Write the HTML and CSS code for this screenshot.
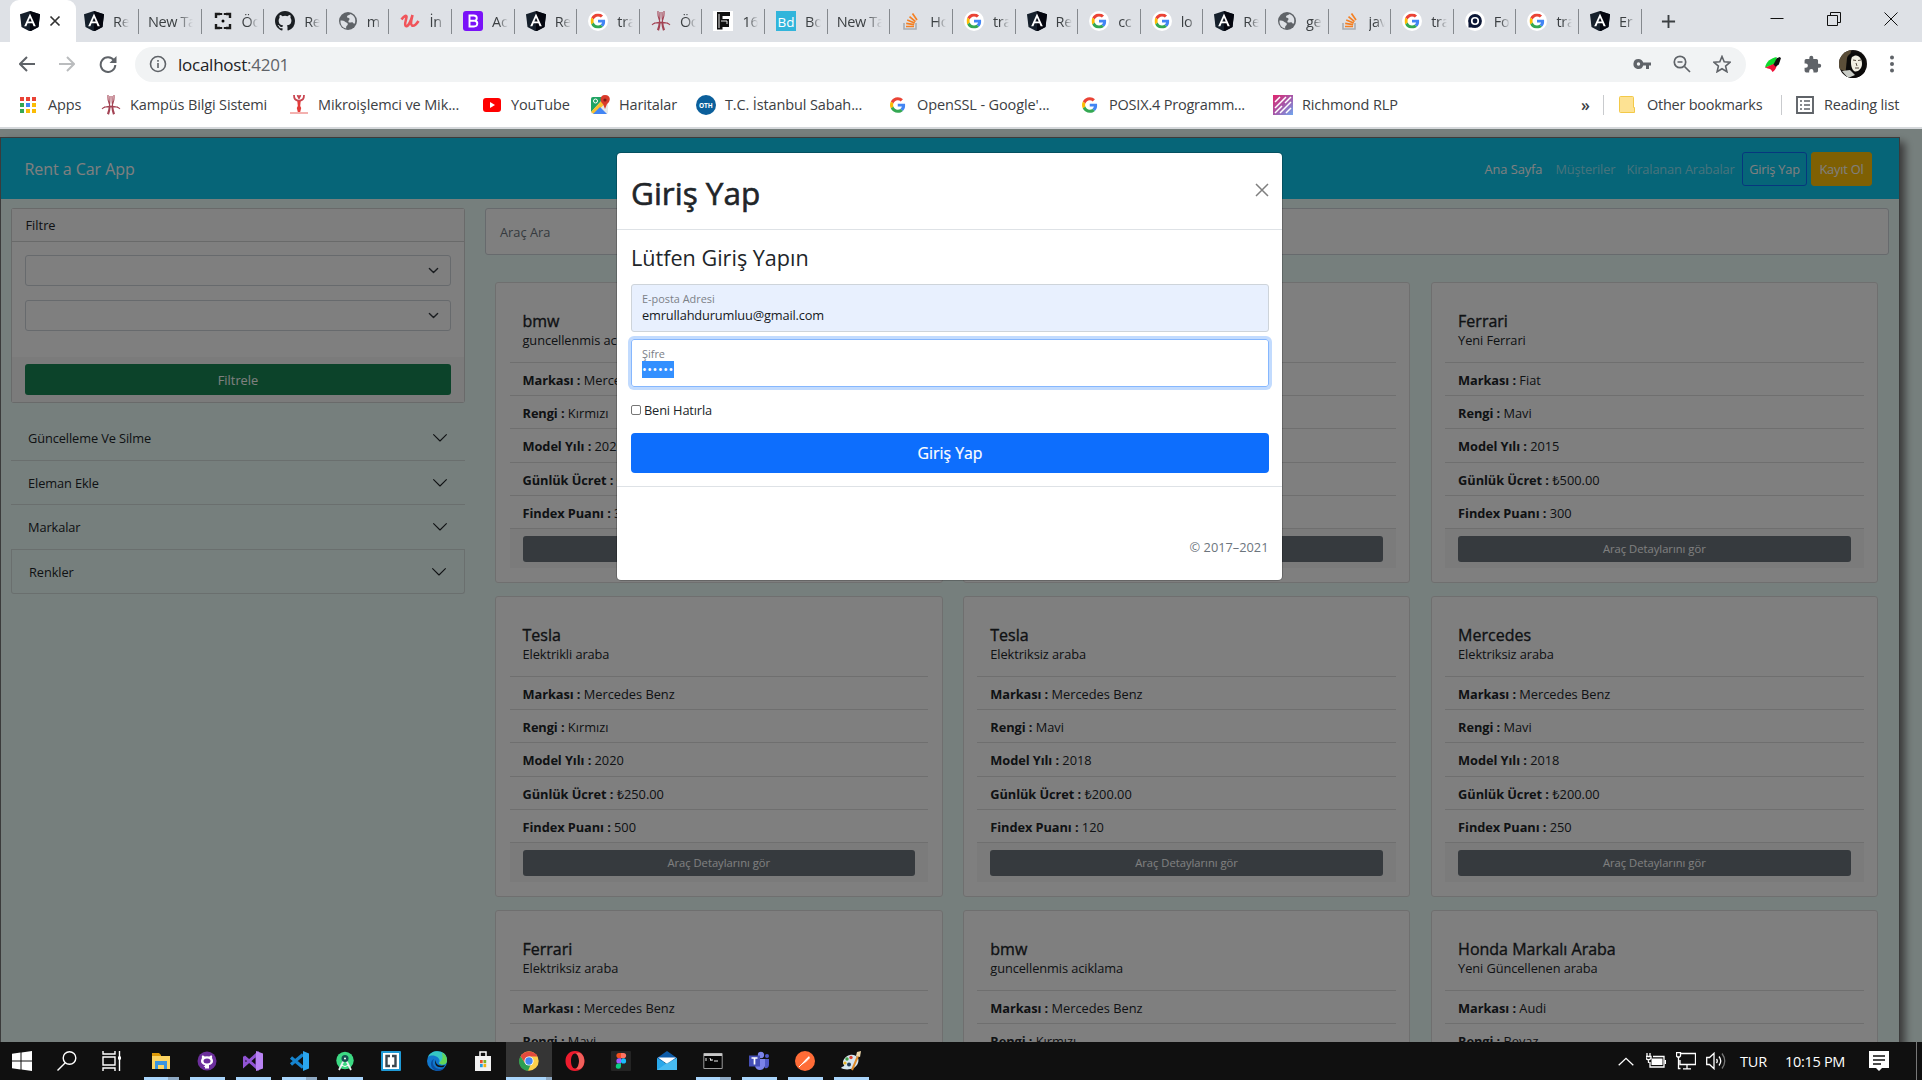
FILE: index.html
```html
<!DOCTYPE html>
<html lang="tr">
<head>
<meta charset="utf-8">
<title>Rent a Car App</title>
<link rel="stylesheet" href="styles.css">
</head>
<body>
<svg class="sprite" width="0" height="0">
<symbol id="ng" viewBox="0 0 20 20"><path d="M10 0 0 3.300 1.500 16 10 20.500 18.500 16 20 3.300Z" fill="#16202c"/><path d="M10 0v20.500L18.500 16 20 3.300Z" fill="#04060f"/><path d="M10 2.500 4.200 15.200h2.200l1.200-2.900h4.800l1.200 2.900h2.200Zm0 4.200 1.700 3.900H8.300Z" fill="#fff"/></symbol>
<symbol id="g" viewBox="0 0 48 48"><path fill="#ea4335" d="M24 9.500c3.500 0 6.700 1.200 9.200 3.600l6.900-6.900C35.900 2.400 30.500 0 24 0 14.600 0 6.500 5.400 2.600 13.200l8 6.200C12.400 13.700 17.700 9.500 24 9.500z"/><path fill="#4285f4" d="M47 24.500c0-1.600-.2-3.100-.4-4.500H24v9h12.900c-.6 3-2.300 5.500-4.800 7.200l7.700 6C44.400 38 47 31.800 47 24.500z"/><path fill="#fbbc05" d="M10.500 28.600c-.5-1.400-.8-3-.8-4.600s.3-3.200.8-4.600l-8-6.200C.9 16.500 0 20.100 0 24s.9 7.500 2.600 10.800z"/><path fill="#34a853" d="M24 48c6.500 0 11.900-2.100 15.900-5.800l-7.700-6c-2.200 1.500-4.900 2.300-8.200 2.300-6.300 0-11.600-4.200-13.500-9.900l-8 6.200C6.500 42.600 14.600 48 24 48z"/></symbol>
<symbol id="gc" viewBox="0 0 20 20"><circle cx="10" cy="10" r="10" fill="#fff"/><use href="#g" x="2.500" y="2.500" width="15" height="15"/></symbol>
<symbol id="globe" viewBox="0 0 20 20"><circle cx="10" cy="10" r="9" fill="#5f6368"/><path d="M2.500 9.500c2 0 3.500 0 4.500 1.200 1 1 3 .8 2.800 2.500-.2 1.500-2 1.300-1.600 4.200-4-.6-6-4-5.700-7.900zM12.500 3c-1 1.500-3.500 1-3.500 2.700s2.500.8 2.500 2.300S9.800 9.500 10.500 11s3.500-.5 4.500.8 1.500 1 2 .2C18 8 16.500 4.500 12.500 3z" fill="#dee1e6"/></symbol>
<symbol id="itu" viewBox="0 0 20 20"><g fill="none" stroke="#a34354" stroke-width="1.100"><path d="M7 0c0 4-.5 5 1 8s1.500 6-.5 11.500M9 1c0 5 0 12-2.500 18M13 0c0 4 .5 5-1 8s-1.500 6 .5 11.500M11 1c0 5 0 12 2.500 18"/><path d="M1 14c3-3.500 15-3.500 18 0M3 12h14"/></g></symbol>
<symbol id="so" viewBox="0 0 20 20"><path d="M3 12v6h12v-6" fill="none" stroke="#a9adb2" stroke-width="1.600"/><path d="M5 15.500h8M5.200 12.400l8 1.200M6.200 9l7.500 3M8.500 5.700l6 5M11.500 2.500l4.500 6.500" stroke="#f48024" stroke-width="1.700"/></symbol>
<symbol id="chev" viewBox="0 0 16 16"><path d="M1.600 4.600 8 11l6.400-6.400" fill="none" stroke="currentColor" stroke-linecap="round" stroke-linejoin="round" stroke-width="1.100"/></symbol>
<symbol id="chevb" viewBox="0 0 16 16"><path d="m2 5 6 6 6-6" fill="none" stroke="#343a40" stroke-linecap="round" stroke-linejoin="round" stroke-width="2"/></symbol>
</svg>

<header class="browser">
  <div class="tabs">
    <div class="tab active"><svg class="fav"><use href="#ng"/></svg><svg class="tab-x" viewBox="0 0 12 12"><path d="m1.500 1.500 9 9m0-9-9 9"/></svg></div>
    <div class="tab second"><svg class="fav"><use href="#ng"/></svg><span>Re</span></div>
    <div class="tab wide"><span>New Ta</span></div>
    <div class="tab"><svg class="fav" viewBox="0 0 20 20"><path d="M3 7V3h4M13 3h4v4M17 13v4h-4M7 17H3v-4M8 2v2M12 2v2M8 16v2M12 16v2" fill="none" stroke="#1b1b1b" stroke-width="2.400"/><circle cx="10" cy="10" r="1.500"/></svg><span>Öd</span></div>
    <div class="tab"><svg class="fav" viewBox="0 0 16 16"><path fill="#1b1f23" d="M8 0C3.580 0 0 3.580 0 8c0 3.540 2.290 6.530 5.470 7.590.4.070.55-.17.55-.38 0-.19-.01-.82-.01-1.490-2.010.37-2.530-.49-2.690-.94-.09-.23-.48-.94-.82-1.130-.28-.15-.68-.52-.01-.53.63-.01 1.080.58 1.230.82.72 1.210 1.870.87 2.330.66.070-.52.28-.87.51-1.070-1.780-.2-3.640-.89-3.640-3.950 0-.87.310-1.590.82-2.150-.08-.2-.36-1.020.08-2.120 0 0 .67-.21 2.200.82a7.500 7.500 0 0 1 4 0c1.530-1.040 2.200-.82 2.200-.82.44 1.100.16 1.920.08 2.120.51.56.82 1.270.82 2.150 0 3.070-1.870 3.750-3.650 3.950.29.25.54.73.54 1.480 0 1.070-.01 1.930-.01 2.200 0 .21.15.46.55.38A8 8 0 0 0 16 8c0-4.420-3.580-8-8-8"/></svg><span>Re</span></div>
    <div class="tab"><svg class="fav"><use href="#globe"/></svg><span>m</span></div>
    <div class="tab"><svg class="fav" viewBox="0 0 20 20"><path d="M1.500 8.500C3.500 5.500 6 4 6.500 5.500S3.500 14 6 15s5-5.500 6.500-11M12.500 4c-1 4-2.500 9.500-.5 10.500s4.500-1.500 6.500-4.500" fill="none" stroke="#f0545a" stroke-width="2.600"/></svg><span>İn</span></div>
    <div class="tab"><svg class="fav" viewBox="0 0 20 20"><rect width="20" height="20" rx="3" fill="#7a12f8"/><path d="M6.500 4.500h4.300c3.800 0 3.800 4.800.9 5.200 3.700.5 3.400 5.800-.7 5.800H6.500zM7 9.700h4.500" fill="none" stroke="#fff" stroke-width="1.900"/></svg><span>Ac</span></div>
    <div class="tab"><svg class="fav"><use href="#ng"/></svg><span>Re</span></div>
    <div class="tab"><svg class="fav"><use href="#gc"/></svg><span>tra</span></div>
    <div class="tab"><svg class="fav"><use href="#itu"/></svg><span>Öd</span></div>
    <div class="tab"><svg class="fav" viewBox="0 0 20 20"><path fill="#fff" d="M0 0h20v20H0z"/><path d="M4 1h13v4H9.500v3H16v8H9.500v2.500H4z" fill="#111"/><path d="M6 3v14M14 10v3M8 10h6" stroke="#fff" stroke-width=".9"/></svg><span>16</span></div>
    <div class="tab"><svg class="fav" viewBox="0 0 20 20"><path fill="#32b5db" d="M0 0h20v20H0z"/><text x="1.500" y="15.500" font-size="13.500" fill="#fff">Bd</text></svg><span>Bo</span></div>
    <div class="tab wide"><span>New Ta</span></div>
    <div class="tab"><svg class="fav"><use href="#so"/></svg><span>Ho</span></div>
    <div class="tab"><svg class="fav"><use href="#gc"/></svg><span>tra</span></div>
    <div class="tab"><svg class="fav"><use href="#ng"/></svg><span>Re</span></div>
    <div class="tab"><svg class="fav"><use href="#gc"/></svg><span>cc</span></div>
    <div class="tab"><svg class="fav"><use href="#gc"/></svg><span>lo</span></div>
    <div class="tab"><svg class="fav"><use href="#ng"/></svg><span>Re</span></div>
    <div class="tab"><svg class="fav"><use href="#globe"/></svg><span>ge</span></div>
    <div class="tab"><svg class="fav"><use href="#so"/></svg><span>jav</span></div>
    <div class="tab"><svg class="fav"><use href="#gc"/></svg><span>tra</span></div>
    <div class="tab"><svg class="fav" viewBox="0 0 20 20"><circle cx="10" cy="10" r="10" fill="#fff"/><circle cx="10" cy="10" r="5.500" fill="none" stroke="#0c1736" stroke-width="2.800"/><circle cx="10" cy="10" r="2.400" fill="#0c1736"/><path d="M3.500 12.500v4h6z" fill="#0c1736"/></svg><span>Fo</span></div>
    <div class="tab"><svg class="fav"><use href="#gc"/></svg><span>tra</span></div>
    <div class="tab"><svg class="fav"><use href="#ng"/></svg><span>Er</span></div>
    <svg class="new-tab" viewBox="0 0 16 16"><path d="M8 1v14M1 8h14"/></svg>
    <div class="win">
      <svg viewBox="0 0 14 14"><path d="M.5 6.500h13"/></svg>
      <svg viewBox="0 0 14 14"><path d="M.5 3.500h10v10H.5zM3.500 3.500v-3h10v10h-3"/></svg>
      <svg viewBox="0 0 14 14"><path d="m.5.5 13 13m0-13-13 13"/></svg>
    </div>
  </div>
  <div class="toolbar">
    <svg class="nav" viewBox="0 0 16 16"><path d="M16 8H1.500M8 1 1 8l7 7"/></svg>
    <svg class="nav dim" viewBox="0 0 16 16"><path d="M0 8h14.500M8 1l7 7-7 7"/></svg>
    <svg class="nav reload" viewBox="0 0 18 18"><path d="M15 5.500A7.300 7.300 0 1 0 16.300 10"/><path class="fill" d="M17.500 1v7h-7z"/></svg>
    <div class="omnibox">
      <svg class="info" viewBox="0 0 18 18"><circle cx="9" cy="9" r="7.500"/><path d="M9 8v5M9 5v1.700"/></svg>
      <span class="url">localhost<i>:4201</i></span>
      <svg class="o1" viewBox="0 0 18 12"><path d="M5.500 1a5 5 0 1 0 4.700 6.500H13V11h3V7.500h2v-3h-7.800A5 5 0 0 0 5.500 1zm0 3.300a1.700 1.700 0 1 1 0 3.400 1.700 1.700 0 0 1 0-3.400z" fill="#5f6368"/></svg>
      <svg class="o2" viewBox="0 0 18 18"><g fill="none" stroke="#5f6368" stroke-width="1.700"><circle cx="7" cy="7" r="5.700"/><path d="m11.500 11.500 5.500 5.500M4.500 7h5"/></g></svg>
      <svg class="o3" viewBox="0 0 18 18"><path d="m9 1.500 2.200 5.300 5.800.5-4.400 3.800 1.300 5.600L9 13.700l-4.900 3 1.300-5.600L1 7.300l5.800-.5z" fill="none" stroke="#5f6368" stroke-width="1.600"/></svg>
    </div>
    <svg class="ext idm" viewBox="0 0 16 16"><path d="M0 11C1 5 6 2 11 1l-1 6z" fill="#0ddc2c"/><path d="M0 11 11 6c1 4-2 8-4 9-1-3-3-3-7-4z" fill="#f01038"/><path d="m8 8 3-6 3-1 1 1-2 6-3 2z" fill="#111"/></svg>
    <svg class="ext puzzle" viewBox="0 0 24 24"><path fill="#5f6368" d="M20.500 11H19V7a2 2 0 0 0-2-2h-4V3.500a2.500 2.500 0 0 0-5 0V5H4a2 2 0 0 0-2 2v3.800h1.500a2.700 2.700 0 0 1 0 5.400H2V20c0 1.100.9 2 2 2h3.800v-1.500a2.700 2.700 0 0 1 5.400 0V22H17a2 2 0 0 0 2-2v-4h1.500a2.500 2.500 0 0 0 0-5z"/></svg>
    <svg class="avatar" viewBox="0 0 28 28"><defs><clipPath id="av"><circle cx="14" cy="14" r="14"/></clipPath></defs><g clip-path="url(#av)"><path fill="#14100f" d="M0 0h28v28H0z"/><path fill="#5b4e39" d="M0 0h12L9 22 0 19z"/><path fill="#0b0a0a" d="M8 8c2-8 18-8 18 5v10l-7 5H6z"/><path fill="#f1eee2" d="M13 7c5-4 10 0 10 7 0 5-5 9-8 7s-4-10-2-14z"/><path d="m14 10 3 .5m2 0 3-.5m-5 3 1 3m-2 2h4" stroke="#55483e"/><path fill="#c9ccc6" d="m3 21 8-1 5 5-7 3z"/></g></svg>
    <svg class="dots" viewBox="0 0 4 18"><circle cx="2" cy="2.500" r="2"/><circle cx="2" cy="9" r="2"/><circle cx="2" cy="15.500" r="2"/></svg>
  </div>
  <nav class="bookmarks">
    <a class="b1"><svg viewBox="0 0 20 20"><path fill="#ea4335" d="M1 2h4v4H1zM7 2h4v4H7zM13 2h4v4h-4z"/><path fill="#34a853" d="M1 8h4v4H1zM1 14h4v4H1z"/><path fill="#4285f4" d="M7 8h4v4H7z"/><path fill="#fbbc05" d="M13 8h4v4h-4zM7 14h4v4H7zM13 14h4v4h-4z"/></svg>Apps</a>
    <a class="b2"><svg><use href="#itu"/></svg>Kampüs Bilgi Sistemi</a>
    <a class="b3"><svg viewBox="0 0 20 20"><path d="M5 0c0 4 1 5 5 6 4-1 5-2 5-6M8.500 0 10 3 11.500 0" fill="none" stroke="#c94550" stroke-width="1.800"/><path d="M8.300 6h3.400l-.5 5 1 2-1 4H8.800l-1-4 1-2z" fill="#e23b39"/><path d="M1 18h18" stroke="#ef9795" stroke-width="1.500"/></svg>Mikroişlemci ve Mik...</a>
    <a class="b4"><svg viewBox="0 0 20 20"><rect x="1" y="3" width="18" height="14" rx="3" fill="#f00"/><path fill="#fff" d="m8 7 5 3-5 3z"/></svg>YouTube</a>
    <a class="b5"><svg viewBox="0 0 20 20"><rect x="1" y="2" width="17" height="17" rx="2" fill="#e6e9e8"/><path fill="#1fa463" d="M3 2h12L1 17V4q0-2 2-2z"/><path fill="#fbc02d" d="m1 17 3 2L18 6V2h-3z"/><path fill="#4285f4" d="m3 19 7-7 7 7z"/><path fill="#d93b2b" d="M15 0c6 0 6 6 2 9l-2 5-2-5c-4-3-3-9 2-9z"/><circle cx="15" cy="5" r="1.600" fill="#7c1c14"/><circle cx="5.500" cy="6" r="2" fill="none" stroke="#fff"/></svg>Haritalar</a>
    <a class="b6"><svg viewBox="0 0 20 20"><circle cx="10" cy="10" r="10" fill="#0b5f9b"/><text x="3" y="12.500" font-size="6.500" font-weight="700" fill="#fff">OTH</text></svg>T.C. İstanbul Sabah...</a>
    <a class="b7"><svg viewBox="0 0 20 20"><use href="#g" x="1" y="2" width="15.500" height="16"/></svg>OpenSSL - Google'...</a>
    <a class="b8"><svg viewBox="0 0 20 20"><use href="#g" x="1" y="2" width="15.500" height="16"/></svg>POSIX.4 Programm...</a>
    <a class="b9"><svg viewBox="0 0 20 20"><defs><linearGradient id="rg" x1="0" y1="0" x2="1" y2="1"><stop offset="0" stop-color="#e0246c"/><stop offset=".5" stop-color="#a757a8"/><stop offset="1" stop-color="#6fa8f0"/></linearGradient></defs><path fill="url(#rg)" d="M0 0h20v20H0z"/><path d="M2 7 7 2M2 13 13 2M2 18 9 11M12 8l6-6M7 18 18 7M13 18l5-5" stroke="#fff" stroke-width="1.500"/></svg>Richmond RLP</a>
    <b class="more">»</b>
    <a class="b10"><svg viewBox="0 0 20 20"><path fill="#fde293" stroke="#f3c948" d="M2.500 1.500h12q1 0 1 1v10h1v5h-14q-1 0-1-1v-14q0-1 1-1z"/></svg>Other bookmarks</a>
    <a class="b11"><svg viewBox="0 0 20 20"><path d="M2 2h16v16H2z" fill="none" stroke="#5f6368" stroke-width="1.900"/><path d="M5 6h2m2 0h6M5 10h2m2 0h6M5 14h2m2 0h6" stroke="#5f6368" stroke-width="1.700"/></svg>Reading list</a>
  </nav>
</header>

<main class="page">
  <div class="app">
    <div class="navbar">
      <span class="brand">Rent a Car App</span>
      <span class="link on">Ana Sayfa</span><span class="link l2">Müşteriler</span><span class="link l3">Kiralanan Arabalar</span>
      <span class="btn-login">Giriş Yap</span><span class="btn-reg">Kayıt Ol</span>
    </div>
    <div class="columns">
      <aside>
        <div class="filter">
          <div class="filter-head">Filtre</div>
          <div class="filter-body">
            <div class="select"><svg><use href="#chevb"/></svg></div>
            <div class="select"><svg><use href="#chevb"/></svg></div>
          </div>
          <div class="filter-foot"><div class="btn-green">Filtrele</div></div>
        </div>
        <div class="acc">
          <div class="acc-item">Güncelleme Ve Silme<svg><use href="#chev"/></svg></div>
          <div class="acc-item">Eleman Ekle<svg><use href="#chev"/></svg></div>
          <div class="acc-item">Markalar<svg><use href="#chev"/></svg></div>
          <div class="acc-item boxed">Renkler<svg><use href="#chev"/></svg></div>
        </div>
      </aside>
      <section>
        <div class="search">Araç Ara</div>
        <div class="cards">
          <article><h5>bmw</h5><p>guncellenmis aciklama</p><ul><li><b>Markası :</b> Mercedes Benz</li><li><b>Rengi :</b> Kırmızı</li><li><b>Model Yılı :</b> 2020</li><li><b>Günlük Ücret :</b> ₺250.00</li><li><b>Findex Puanı :</b> 300</li></ul><div class="foot"><div></div></div></article>
          <article><h5>Tesla</h5><p>Elektrikli araba</p><ul><li></li><li></li><li></li><li></li><li></li></ul><div class="foot"><div></div></div></article>
          <article><h5>Ferrari</h5><p>Yeni Ferrari</p><ul><li><b>Markası :</b> Fiat</li><li><b>Rengi :</b> Mavi</li><li><b>Model Yılı :</b> 2015</li><li><b>Günlük Ücret :</b> ₺500.00</li><li><b>Findex Puanı :</b> 300</li></ul><div class="foot"><div>Araç Detaylarını gör</div></div></article>
          <article><h5>Tesla</h5><p>Elektrikli araba</p><ul><li><b>Markası :</b> Mercedes Benz</li><li><b>Rengi :</b> Kırmızı</li><li><b>Model Yılı :</b> 2020</li><li><b>Günlük Ücret :</b> ₺250.00</li><li><b>Findex Puanı :</b> 500</li></ul><div class="foot"><div>Araç Detaylarını gör</div></div></article>
          <article><h5>Tesla</h5><p>Elektriksiz araba</p><ul><li><b>Markası :</b> Mercedes Benz</li><li><b>Rengi :</b> Mavi</li><li><b>Model Yılı :</b> 2018</li><li><b>Günlük Ücret :</b> ₺200.00</li><li><b>Findex Puanı :</b> 120</li></ul><div class="foot"><div>Araç Detaylarını gör</div></div></article>
          <article><h5>Mercedes</h5><p>Elektriksiz araba</p><ul><li><b>Markası :</b> Mercedes Benz</li><li><b>Rengi :</b> Mavi</li><li><b>Model Yılı :</b> 2018</li><li><b>Günlük Ücret :</b> ₺200.00</li><li><b>Findex Puanı :</b> 250</li></ul><div class="foot"><div>Araç Detaylarını gör</div></div></article>
          <article><h5>Ferrari</h5><p>Elektriksiz araba</p><ul><li><b>Markası :</b> Mercedes Benz</li><li><b>Rengi :</b> Mavi</li></ul></article>
          <article><h5>bmw</h5><p>guncellenmis aciklama</p><ul><li><b>Markası :</b> Mercedes Benz</li><li><b>Rengi :</b> Kırmızı</li></ul></article>
          <article><h5>Honda Markalı Araba</h5><p>Yeni Güncellenen araba</p><ul><li><b>Markası :</b> Audi</li><li><b>Rengi :</b> Beyaz</li></ul></article>
        </div>
      </section>
    </div>
  </div>
  <div class="backdrop">
    <div class="modal">
      <div class="modal-head"><h1>Giriş Yap</h1><svg viewBox="0 0 14 14"><path d="m1 1 12 12m0-12L1 13"/></svg></div>
      <div class="modal-body">
        <h3>Lütfen Giriş Yapın</h3>
        <div class="field mail"><small>E-posta Adresi</small><span>emrullahdurumluu@gmail.com</span></div>
        <div class="field focus"><small>Şifre</small><mark>••••••</mark></div>
        <div class="remember"><i></i>Beni Hatırla</div>
        <div class="btn-blue">Giriş Yap</div>
      </div>
      <div class="modal-foot">© 2017–2021</div>
    </div>
  </div>
</main>

<footer class="taskbar">
  <div class="ti start"><svg viewBox="0 0 20 20"><path fill="#fff" d="m0 2.800 8.500-1.200v8H0zM9.500 1.400 20 0v9.600H9.500zM0 10.500h8.500v8L0 17.300zM9.500 10.500H20V20L9.500 18.600z"/></svg></div>
  <div class="ti search-i"><svg viewBox="0 0 20 20"><g fill="none" stroke="#fff" stroke-width="1.400"><circle cx="12.500" cy="7" r="6.300"/><path d="M8.300 11.700.5 19.500"/></g></svg></div>
  <div class="ti"><svg viewBox="0 0 20 20"><path d="M1 0v3h12V0M1 6h12v8H1zM1 20v-3h12v3M17.500 0v20" fill="none" stroke="#fff" stroke-width="1.400"/><path fill="#fff" d="M16 5.500h3v3h-3z"/></svg></div>
  <div class="ti first run multi"><svg viewBox="0 0 20 20"><path fill="#dd9a08" d="M1 2h7l2 2v3H1z"/><path fill="#fcd462" d="M1 5h18v13H1z"/><path fill="#3a94df" d="M4 10h12v8h-3v-4H7v4H4z"/></svg></div>
  <div class="ti run"><svg viewBox="0 0 20 20"><circle cx="10" cy="10" r="9.500" fill="#6c2f9c"/><path d="M6.500 16c1-1 1.500-1 1.500-2-4-.5-5-4-3-7-.3-1-.2-2 .2-2.500 1 0 2 .5 2.600 1q2.200-.6 4.400 0c.6-.5 1.600-1 2.600-1 .4.500.5 1.500.2 2.500 2 3 1 6.500-3 7v3.500H8V16z" fill="#fff"/><ellipse cx="10" cy="10" rx="3.500" ry="2.500" fill="#6c2f9c"/></svg></div>
  <div class="ti run"><svg viewBox="0 0 20 20"><path d="M1 5.500v9L14 3v14L1 5.500" fill="none" stroke="#9154d5" stroke-width="3"/><path fill="#b983f3" d="m13 0 7 2.500v15L13 20z"/></svg></div>
  <div class="ti run multi"><svg viewBox="0 0 20 20"><path d="m2 6.500 12 10M2 13.500l12-10" stroke="#1684cf" stroke-width="3.300"/><path fill="#2ba6ee" d="m14 0 6 2.500v15L14 20z"/></svg></div>
  <div class="ti run"><svg viewBox="0 0 20 20"><circle cx="10" cy="9.500" r="8.700" fill="#3cd983"/><path d="m9 9-5 10M11 9l5 10" stroke="#e9edf0" stroke-width="1.800"/><circle cx="10" cy="7.500" r="3.500" fill="#164f50"/><circle cx="10" cy="7.500" r="1" fill="#fff"/><path d="M6 14q4 3 8 0" stroke="#fff" fill="none"/></svg></div>
  <div class="ti"><svg viewBox="0 0 20 20"><rect width="20" height="20" rx="1" fill="#1f9ad6"/><path fill="#fff" d="M2 2h16v16H2z"/><path d="M9 5H5.500v10H9M11 5h3.500v10H11" fill="none" stroke="#3a4750" stroke-width="2.400"/></svg></div>
  <div class="ti"><svg viewBox="0 0 20 20"><circle cx="10" cy="10" r="10" fill="#1177cd"/><path fill="#35c7c4" d="M1 6C4-2 20-2 20 9c0 5-6 6-8 3 3-5-6-10-11-6z"/><path fill="#63d657" d="M15 1.500c5 3 6 8 4 11-2 2-5 1-7-.5 4-3 4-6 3-10.500z"/><path fill="#0c4fa0" d="M7 8c-3 4 0 10 7 10q2 0 4-2c-3 6-13 5-14-2-.5-3 1-5 3-6z"/><path fill="#101010" d="M9 9c-1 4 3 7 9 5l-1.500 2C10 17.500 6.500 13 9 9z"/></svg></div>
  <div class="ti"><svg viewBox="0 0 20 20"><path d="M7 6V1h6v5" fill="none" stroke="#fff" stroke-width="1.500"/><path fill="#f2f2f2" d="M2 5h16v15H2z"/><path fill="#e8502a" d="M7 9h2.700v3.200H7z"/><path fill="#7bb52c" d="M10.500 9h2.700v3.200h-2.700z"/><path fill="#249ee0" d="M7 13h2.700v3.200H7z"/><path fill="#f5b412" d="M10.500 13h2.700v3.200h-2.700z"/></svg></div>
  <div class="ti run chrome"><svg viewBox="0 0 20 20"><circle cx="10" cy="10" r="9.700" fill="#fcd04b"/><path fill="#e24b3e" d="M1.500 5.300C5-1 15-1.500 18.700 5.500H10L6 12z"/><path fill="#2d9f52" d="M1.500 5.300 6 12.300l5.500 1.700-2.500 5.700C1 19-2 11 1.500 5.300z"/><circle cx="10" cy="10" r="4.600" fill="#fff"/><circle cx="10" cy="10" r="3.700" fill="#4387f0"/></svg></div>
  <div class="ti"><svg viewBox="0 0 20 20"><path fill="#ed1c2e" fill-rule="evenodd" d="M10 0C4 0 .5 4.500.5 10S4 20 10 20s9.500-4.500 9.500-10S16 0 10 0zm0 2.500c2.500 0 4 3.400 4 7.500s-1.500 7.500-4 7.500S6 14.100 6 10s1.500-7.500 4-7.500z"/><path fill="#f0605b" d="M11 2.700C13 1 16 2 17 3.500c3 3.500 3 9.500 0 13-1.500 1.500-4 2.500-6 .8 4-1.300 4-13.300 0-14.600z"/></svg></div>
  <div class="ti"><svg viewBox="0 0 20 20"><rect width="20" height="20" rx="1" fill="#242424"/><path fill="#f24e1e" d="M10 2H8a2.600 2.600 0 0 0 0 5.200h2z"/><path fill="#ff7262" d="M10 2h2.500a2.600 2.600 0 0 1 0 5.200H10z"/><path fill="#a259ff" d="M10 7.300H8a2.600 2.600 0 0 0 0 5.200h2z"/><circle cx="12.500" cy="9.900" r="2.600" fill="#1abcfe"/><path fill="#0acf83" d="M8 12.600h2v2.600A2.600 2.600 0 1 1 8 12.600z"/></svg></div>
  <div class="ti"><svg viewBox="0 0 20 20"><path fill="#0d5ba8" d="m0 7 10-7 10 7v4H0z"/><path fill="#fff" d="M1 6.500h18L10 13z"/><path fill="#29a8ea" d="m0 7 10 6 10-6v12H0z"/><path fill="#5cc8f5" d="m0 19 10-7 10-5v12z" opacity=".6"/></svg></div>
  <div class="ti run multi"><svg viewBox="0 0 20 20"><path fill="#050505" stroke="#9c9c9c" d="M.8 2.500h18.400v15H.8z"/><path fill="#c8c8c8" d="M1 2.500h18V5H1z"/><path d="M3 7v3M5 8h.1m0 2h.1M7 7l1 3M9 8v2M11 10h4" stroke="#eee"/></svg></div>
  <div class="ti run"><svg viewBox="0 0 20 20"><circle cx="12" cy="4" r="3.200" fill="#7b83eb"/><circle cx="18" cy="5" r="2" fill="#5059c9"/><path fill="#5059c9" d="M13 8h7v6q-1 4-4 3z"/><path fill="#7b83eb" d="M8 8h8v7q-1 4-5 4t-5-4z"/><path fill="#454fb7" d="M0 4.500h11v11H0z"/><path d="M2.500 7h6M5.500 7v6.500" stroke="#fff" stroke-width="1.700"/></svg></div>
  <div class="ti run"><svg viewBox="0 0 20 20"><circle cx="10" cy="10" r="10" fill="#ff6c37"/><path d="m5 15 5-6 4-4 1 2-4 4z" fill="#ffe9e0"/><path d="m4 16 10-10" stroke="#fff"/></svg></div>
  <div class="ti run"><svg viewBox="0 0 20 20"><path fill="#d7e6ef" d="M9 4c6-1 10 3 8 8-3 8-14 7-17 5 2-2 4-2 3-3-3-3 1-9 6-10z"/><circle cx="6" cy="8" r="1.700" fill="#44a34a"/><circle cx="10" cy="6.500" r="1.700" fill="#d94130"/><circle cx="4" cy="12" r="1.600" fill="#e7b52d"/><circle cx="8" cy="13.500" r="2" fill="#233d5c"/><path d="m11 19 6-14" stroke="#e08a27" stroke-width="2"/><path fill="#ecd6aa" d="m15 5 1-4 4-1-1 6z"/></svg></div>
  <div class="tray">
    <svg class="t1" viewBox="0 0 16 9"><path d="m.7 8.300 7.300-7 7.300 7"/></svg>
    <svg class="t2" viewBox="0 0 20 16"><path fill="#fff" stroke="none" d="M5.500 5.500h11v6.500h-11z"/><path d="M7 3.500h11v10.500H4V9M19.500 7v4M1 0v3M4 0v3M0 3.500h5v2q-2.500 2.500-5 0zM2.500 6v4"/></svg>
    <svg class="t3" viewBox="0 0 20 18"><path d="M5 1.500h14.500v11H4V8M11 13v3.500M7 16.800h8M.5.500h4v3.500l-1 1h-2l-1-1zM2.500 5v11.500h2"/></svg>
    <svg class="t4" viewBox="0 0 20 18"><path d="M.7 5.500h2.800L8 1.300v15.400l-4.500-4.200H.7zM10.500 7q1.500 2 0 4M13 4.500q3.500 4.500 0 9"/><path stroke="#777" d="M16 1.500q5.500 7.500 0 15"/></svg>
    <span class="lang">TUR</span><span class="time">10:15 PM</span>
    <svg class="t5" viewBox="0 0 20 20"><path fill="#fff" stroke="none" d="M0 0h20v17h-7l-3 3-3-3H0z"/><path stroke="#101010" d="M4 5h12M4 9h12M4 13h8"/></svg>
    <i class="edge"></i>
  </div>
</footer>
</body>
</html>
```
FILE: styles.css
```css
* { box-sizing: border-box; }
html, body { margin: 0; height: 100%; overflow: hidden; }
body {
  width: 1922px; height: 1080px; display: flex; flex-direction: column;
  font-family: "Open Sans", "Noto Sans", sans-serif; font-size: 12.8px; color: #212529;
}
svg { display: block; flex: none; }
.sprite { position: absolute; }
h1, h3, h5, p, ul { margin: 0; padding: 0; font-weight: 400; }

/* browser chrome */
.browser { flex: none; height: 129px; background: #fff; border-bottom: 2px solid #d5d8db; font-size: 14.500px; color: #3c4043; }
.tabs { display: flex; align-items: center; height: 42px; background: #dee1e6; padding-left: 9.500px; }
.tab { flex: none; width: 62.620px; height: 25px; display: flex; align-items: center; padding-left: 11px; border-right: 1.500px solid #85898e; overflow: hidden; }
.tab span { margin-left: 9px; width: 16px; overflow: hidden; white-space: nowrap; letter-spacing: -.3px; -webkit-mask-image: linear-gradient(90deg, #000 40%, transparent); mask-image: linear-gradient(90deg, #000 40%, transparent); }
.tab.wide { padding-left: 9px; }
.tab.wide span { margin: 0; width: 45px; -webkit-mask-image: linear-gradient(90deg, #000 65%, transparent); mask-image: linear-gradient(90deg, #000 65%, transparent); letter-spacing: -.4px; }
.tab.active { width: 66px; height: 42px; padding: 0 0 0 10px; border: 0; background: #fff; border-radius: 9px 9px 0 0; }
.tab.second { width: 63.500px; padding-left: 8.500px; }
.fav { width: 20px; height: 20px; }
.tab-x { width: 12px; height: 12px; margin-left: 9px; }
.tab-x path { stroke: #333; stroke-width: 1.700; }
.new-tab { width: 15px; height: 15px; margin-left: 19px; }
.new-tab path { stroke: #3c4043; stroke-width: 2; }
.win { display: flex; align-items: center; gap: 43px; margin-left: 94px; margin-top: -5px; }
.win svg { width: 14px; height: 14px; }
.win path { stroke: #111; fill: none; }
.toolbar { display: flex; align-items: center; height: 44px; padding-left: 19px; }
.nav { width: 16px; height: 16px; margin-right: 24px; fill: none; stroke: #5f6368; stroke-width: 2; }
.nav.dim { stroke: #babcbe; }
.nav.reload { width: 18px; height: 18px; margin-right: 18px; }
.nav .fill { fill: #5f6368; stroke: none; }
.omnibox { display: flex; align-items: center; width: 1611px; height: 35px; border-radius: 18px; background: #f1f3f4; padding-left: 14px; }
.info { width: 18px; height: 18px; fill: none; stroke: #5f6368; stroke-width: 1.600; }
.url { width: 1449px; margin-left: 11px; font-size: 17px; letter-spacing: -.25px; color: #202124; }
.url i { font-style: normal; color: #5f6368; }
.o1 { width: 18px; height: 12px; margin-left: 6px; }
.o2 { width: 18px; height: 18px; margin-left: 22px; }
.o3 { width: 18px; height: 18px; margin-left: 22px; }
.idm { width: 17px; height: 17px; margin-left: 19px; }
.puzzle { width: 19px; height: 19px; margin-left: 21px; }
.avatar { width: 28px; height: 28px; margin-left: 17px; }
.dots { width: 4px; height: 18px; margin-left: 23px; fill: #5f6368; }
.bookmarks { display: flex; align-items: center; height: 37px; padding-left: 19px; letter-spacing: -.13px; white-space: nowrap; }
.bookmarks a { flex: none; display: flex; align-items: center; gap: 9px; }
.bookmarks svg { width: 20px; height: 20px; }
.b1 { width: 82px; } .b2 { width: 188px; } .b3 { width: 193px; } .b4 { width: 108px; }
.b5 { width: 106px; } .b6 { width: 193px; } .b7 { width: 192px; } .b8 { width: 192px; } .b9 { width: 308px; }
.bookmarks .b7, .bookmarks .b8 { gap: 8px; }
.bookmarks .b8 { letter-spacing: -.2px; }
.more { width: 22px; font-size: 16px; font-weight: 600; }
.b10 { height: 20px; width: 178px; border-left: 1px solid #c9cbce; padding-left: 14px; letter-spacing: -.25px; }
.b11 { height: 20px; border-left: 1px solid #c9cbce; padding-left: 13px; letter-spacing: -.2px; }

/* page */
.page { position: relative; flex: none; height: 913px; overflow: hidden; background: #edfffb; padding-top: 8px; }
.app { width: 1900px; height: 1200px; border: 1px solid #777; background: #edfffb; box-shadow: 5px 5px 8px #777; }
.navbar { display: flex; align-items: center; height: 61px; background: #0dcaf0; padding-left: 23.500px; color: #fff; }
.brand { flex: 1; font-size: 16px; letter-spacing: -.05px; }
.link { width: 71px; letter-spacing: -.15px; color: rgba(255,255,255,.55); }
.link.on { color: #fff; letter-spacing: -.05px; }
.l3 { width: 115.500px; white-space: nowrap; }
.btn-login, .btn-reg { height: 34px; line-height: 33px; border: 1px solid #0d6efd; border-radius: 3px; width: 65px; text-align: center; letter-spacing: -.2px; white-space: nowrap; }
.btn-reg { width: 61px; margin: 0 27px 0 4px; background: #ffc107; border-color: #ffc107; }
.columns { display: flex; padding: 9px 10px 0; gap: 20px; }
aside { width: 454px; }
.filter { height: 195px; border: 1px solid #d3d4d4; border-bottom-width: 2px; border-radius: 3px; background: #fff; }
.filter-head { height: 33px; line-height: 33px; padding-left: 13.500px; background: #fcfcfc; border-bottom: 1px solid #d3d4d4; }
.filter-body { height: 115px; padding: 13px 13px 0; }
.select { display: flex; align-items: center; justify-content: flex-end; height: 31px; margin-bottom: 14px; padding-right: 11px; border: 1px solid #ced4da; border-radius: 3px; }
.select svg { width: 11px; height: 11px; }
.filter-foot { height: 45px; padding: 7px 13px 0; background: #f7f7f7; }
.btn-green { height: 31px; line-height: 32px; border-radius: 3px; background: #198754; color: #fff; text-align: center; }
.acc { margin-top: 13px; letter-spacing: -.1px; }
.acc-item { display: flex; align-items: center; justify-content: space-between; height: 44.500px; padding: 1px 17px 0; border-bottom: 1px solid #d5dfdd; }
.acc-item.boxed { border: 1px solid #d5dfdd; border-top: 0; border-radius: 0 0 3px 3px; }
.acc-item svg { width: 16px; height: 16px; }
section { width: 1403.500px; }
.search { height: 47px; line-height: 47px; border: 1px solid #ced4da; border-radius: 3px; background: #fff; padding-left: 14px; color: #6c757d; }
.cards { display: grid; grid-template-columns: repeat(3, 447.500px); column-gap: 20.300px; row-gap: 13.500px; grid-auto-rows: 300.500px; padding: 27px 0 0 10px; }
article { border: 1px solid #dfdfdf; border-radius: 3px; background: #fff; padding: 27px 13.500px 0; }
h5 { height: 21px; line-height: 22px; padding-left: 13px; font-size: 16px; -webkit-text-stroke: .35px; }
p { height: 31px; line-height: 19px; padding-left: 13px; letter-spacing: -.08px; }
ul { list-style: none; border-bottom: 1px solid #dfdfdf; }
li { height: 33.200px; line-height: 34px; border-top: 1px solid #dfdfdf; padding-left: 13px; }
li b { letter-spacing: -.07px; }
.foot { height: 39px; padding: 7px 13px 0; background: #f7f7f7; }
.foot div { height: 26px; line-height: 26px; border-radius: 3px; background: #6c757d; color: #fff; text-align: center; font-size: 11.200px; }

/* login dialog */
.backdrop { position: absolute; inset: 0; background: rgba(0,0,0,.5); }
.modal { width: 665px; height: 427px; margin: 24px 0 0 617px; background: #fff; border-radius: 4px; box-shadow: 0 0 0 1px rgba(0,0,0,.2); }
.modal-head { display: flex; justify-content: space-between; height: 77px; padding: 0 13px 0 14px; border-bottom: 1px solid #dee2e6; }
.modal h1 { font-size: 31.500px; line-height: 79px; -webkit-text-stroke: .6px; }
.modal-head svg { width: 14px; height: 14px; margin-top: 30px; stroke: #7f7f7f; stroke-width: 1.500; }
.modal-body { height: 257px; padding: 13px 13px 0 14px; border-bottom: 1px solid #dee2e6; }
h3 { height: 41px; line-height: 29px; font-size: 21.600px; }
.field { height: 48px; margin-bottom: 7px; padding: 5px 10px 0; border: 1px solid #ced4da; border-radius: 3px; }
.field small { display: block; height: 16px; line-height: 17px; font-size: 10.900px; color: #7b8087; }
.field span { display: block; line-height: 18px; color: #16191c; letter-spacing: -.15px; }
.field.mail { background: #e8f0fe; }
.field.focus { border-color: #86b7fe; box-shadow: 0 0 0 3px #c2dbfe; }
mark { display: block; width: 32px; height: 17px; line-height: 17px; background: #3390ff; color: #fff; letter-spacing: .5px; }
.remember { display: flex; align-items: center; gap: 3px; height: 20px; margin-top: 13px; letter-spacing: -.15px; }
.remember i { width: 10px; height: 10px; border: 1px solid #767676; border-radius: 2px; }
.btn-blue { height: 40px; line-height: 40px; margin-top: 13px; border-radius: 4px; background: #0d6efd; color: #fff; text-align: center; font-size: 15.800px; -webkit-text-stroke: .2px; }
.modal-foot { padding: 50px 13.500px 0 0; line-height: 20px; text-align: right; color: #6c757d; }

/* taskbar */
.taskbar { flex: none; display: flex; height: 38px; background: #101010; color: #fff; }
.ti { position: relative; flex: none; width: 46px; display: flex; align-items: center; justify-content: center; }
.ti svg { width: 20px; height: 20px; }
.ti.start { width: 43px; } .ti.search-i { width: 48px; } .ti.search-i + .ti { width: 42px; }
.ti.first { width: 46px; margin-left: 5px; }
.run::after { content: ""; position: absolute; left: 5.500px; bottom: 0; width: 35px; height: 3px; background: #a9d5fb; }
.run.multi::after { background: linear-gradient(90deg, #a9d5fb 69%, #8ea9c3 69%); }
.ti.chrome { background: #353535; }
.ti.chrome::after { left: 0; width: 46px; background: linear-gradient(90deg, #a9d5fb 88%, #8ea9c3 88%); }
.tray { flex: 1; display: flex; align-items: center; justify-content: flex-end; }
.tray svg { fill: none; stroke: #fff; stroke-width: 1.300; height: 18px; }
.tray .t1 { width: 16px; height: 9px; margin-right: 12px; }
.t2 { width: 20px; margin-right: 10px; }
.t3 { width: 20px; margin-right: 10px; }
.t4 { width: 20px; margin-right: 14px; }
.lang { width: 45px; font-size: 14.500px; letter-spacing: -.2px; }
.time { width: 84px; font-size: 14.500px; letter-spacing: -.3px; white-space: nowrap; }
.tray .t5 { width: 20px; height: 20px; }
.edge { width: 1px; height: 38px; margin: 0 5px 0 27px; background: #777; }
```
